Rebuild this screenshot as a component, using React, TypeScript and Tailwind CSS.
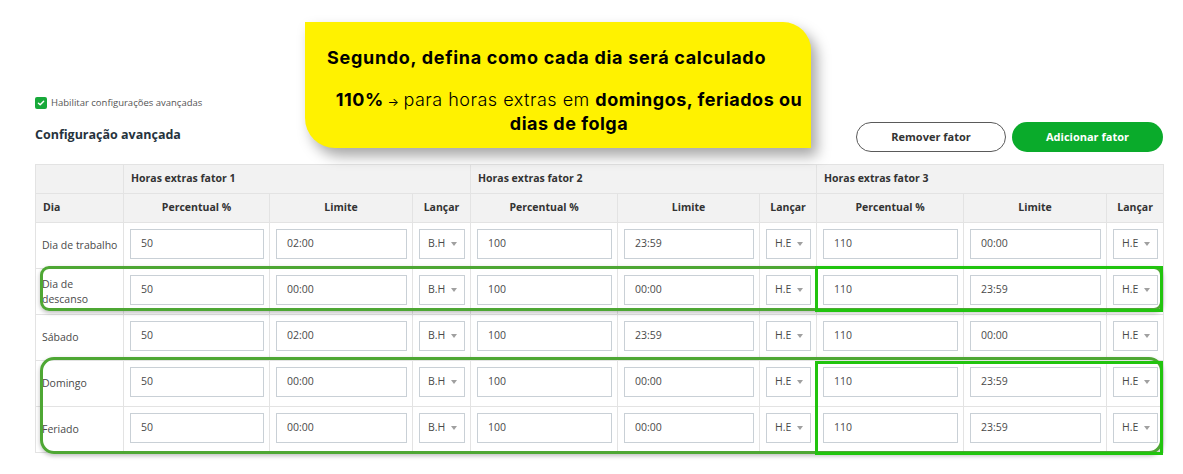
import type { ReactNode } from 'react';

const colWidths = [88, 146, 143, 58, 147, 142, 57, 147, 143, 57];

type Factor = { pct: string; limit: string; kind: string };
type Row = { day: ReactNode; factors: Factor[] };

const rows: Row[] = [
  {
    day: 'Dia de trabalho',
    factors: [
      { pct: '50', limit: '02:00', kind: 'B.H' },
      { pct: '100', limit: '23:59', kind: 'H.E' },
      { pct: '110', limit: '00:00', kind: 'H.E' },
    ],
  },
  {
    day: (
      <>
        Dia de
        <br />
        descanso
      </>
    ),
    factors: [
      { pct: '50', limit: '00:00', kind: 'B.H' },
      { pct: '100', limit: '00:00', kind: 'H.E' },
      { pct: '110', limit: '23:59', kind: 'H.E' },
    ],
  },
  {
    day: 'Sábado',
    factors: [
      { pct: '50', limit: '02:00', kind: 'B.H' },
      { pct: '100', limit: '23:59', kind: 'H.E' },
      { pct: '110', limit: '00:00', kind: 'H.E' },
    ],
  },
  {
    day: 'Domingo',
    factors: [
      { pct: '50', limit: '00:00', kind: 'B.H' },
      { pct: '100', limit: '00:00', kind: 'H.E' },
      { pct: '110', limit: '23:59', kind: 'H.E' },
    ],
  },
  {
    day: 'Feriado',
    factors: [
      { pct: '50', limit: '00:00', kind: 'B.H' },
      { pct: '100', limit: '00:00', kind: 'H.E' },
      { pct: '110', limit: '23:59', kind: 'H.E' },
    ],
  },
];

function TextBox({ value }: { value: string }) {
  return (
    <div className="h-[30px] w-full border border-[#c9d0d6] bg-white pl-[10px] flex items-center text-[10.5px] text-[#4a4a4a]">
      {value}
    </div>
  );
}

function SelectBox({ value }: { value: string }) {
  return (
    <div className="h-[30px] w-full border border-[#c9d0d6] bg-white pl-[8px] pr-[7px] flex items-center justify-between text-[10.5px] text-[#4a4a4a]">
      <span>{value}</span>
      <span className="w-0 h-0 border-l-[3.5px] border-r-[3.5px] border-t-[4px] border-l-transparent border-r-transparent border-t-[#a0a0a0]" />
    </div>
  );
}

export default function App() {
  const th = 'border border-[#e3e3e3] bg-[#f2f2f2] h-[29px] px-[7px] text-[10.5px] font-bold text-[#333]';
  const td = 'border border-[#e3e3e3] h-[46px] pl-[6px] pr-[5px] pt-[6px] align-top';

  return (
    <div className="relative w-[1183px] h-[474px] overflow-hidden bg-white font-['Open_Sans','Noto_Sans',sans-serif]">
      <div className="ml-[35px] w-[1128px] pt-[97px]">
        <div className="flex items-center gap-[4px] h-[12px]">
          <div className="w-[12px] h-[12px] rounded-[2px] bg-[#17a93a] flex items-center justify-center">
            <svg width="8" height="8" viewBox="0 0 10 10" fill="none">
              <path d="M1.8 5.2 4 7.3 8.3 2.8" stroke="white" strokeWidth="1.8" strokeLinecap="round" strokeLinejoin="round" />
            </svg>
          </div>
          <span className="text-[9.5px] text-[#555]">Habilitar configurações avançadas</span>
        </div>

        <div className="mt-[13px] flex items-start justify-between">
          <h2 className="pt-[4px] text-[12.5px] font-bold text-[#26333d]">Configuração avançada</h2>
          <div className="flex gap-[6px]">
            <button className="w-[150px] h-[30px] rounded-full border border-[#5a5a5a] bg-white text-[11px] font-bold text-[#333]">
              Remover fator
            </button>
            <button className="w-[151px] h-[30px] rounded-full bg-[#0aab2b] text-[11px] font-bold text-white">
              Adicionar fator
            </button>
          </div>
        </div>

        <table className="mt-[12px] w-[1128px] table-fixed border-collapse">
          <colgroup>
            {colWidths.map((w, i) => (
              <col key={i} style={{ width: w }} />
            ))}
          </colgroup>
          <thead>
            <tr>
              <th className={th} />
              {[1, 2, 3].map((n) => (
                <th key={n} colSpan={3} className={`${th} text-left`}>
                  Horas extras fator {n}
                </th>
              ))}
            </tr>
            <tr>
              <th className={`${th} text-left`}>Dia</th>
              {[1, 2, 3].map((n) => (
                <>
                  <th key={`p${n}`} className={`${th} text-center`}>Percentual %</th>
                  <th key={`l${n}`} className={`${th} text-center`}>Limite</th>
                  <th key={`s${n}`} className={`${th} text-center`}>Lançar</th>
                </>
              ))}
            </tr>
          </thead>
          <tbody>
            {rows.map((r, i) => (
              <tr key={i}>
                <td className="border border-[#e3e3e3] h-[46px] pl-[6px] pr-[2px] text-[10.5px] leading-[15px] text-[#4a4a4a] whitespace-nowrap">
                  {r.day}
                </td>
                {r.factors.map((f, j) => (
                  <>
                    <td key={`p${j}`} className={td}>
                      <TextBox value={f.pct} />
                    </td>
                    <td key={`l${j}`} className={td}>
                      <TextBox value={f.limit} />
                    </td>
                    <td key={`s${j}`} className={td}>
                      <SelectBox value={f.kind} />
                    </td>
                  </>
                ))}
              </tr>
            ))}
          </tbody>
        </table>
      </div>

      {/* highlight marks drawn over the table */}
      <div className="absolute left-[40px] top-[266px] w-[1123px] h-[45px] rounded-[9px] border-[3px] border-[#4ea734] shadow-[0_2px_4px_rgba(0,0,0,0.25)]" />
      <div className="absolute left-[815px] top-[266px] w-[348px] h-[46px] border-[3px] border-[#21c40e]" />
      <div className="absolute left-[40px] top-[357px] w-[1123px] h-[97px] rounded-[14px] border-[3px] border-[#4ea734] shadow-[0_2px_4px_rgba(0,0,0,0.25)]" />
      <div className="absolute left-[815px] top-[361px] w-[348px] h-[94px] border-[3px] border-[#21c40e]" />

      {/* callout */}
      <div className="absolute left-[305px] top-[22px] w-[506px] h-[126px] rounded-tr-[28px] rounded-bl-[30px] bg-[#fff200] pl-[22px] pt-[25px] shadow-[6px_8px_14px_rgba(0,0,0,0.35)] font-['Inter','Noto_Sans',sans-serif] text-black">
        <p className="text-[18px] font-bold leading-[22px] tracking-[0.7px] whitespace-nowrap">
          Segundo, defina como cada dia será calculado
        </p>
        <p className="mt-[20px] text-center text-[18px] leading-[22px] tracking-[0.5px] whitespace-nowrap">
          <span className="font-bold">110%</span>
          <span className="text-[12px]"> → </span>
          <span className="font-light">para horas extras em </span>
          <span className="font-bold">domingos, feriados ou</span>
          <br />
          <span className="font-bold">dias de folga</span>
        </p>
      </div>
    </div>
  );
}
